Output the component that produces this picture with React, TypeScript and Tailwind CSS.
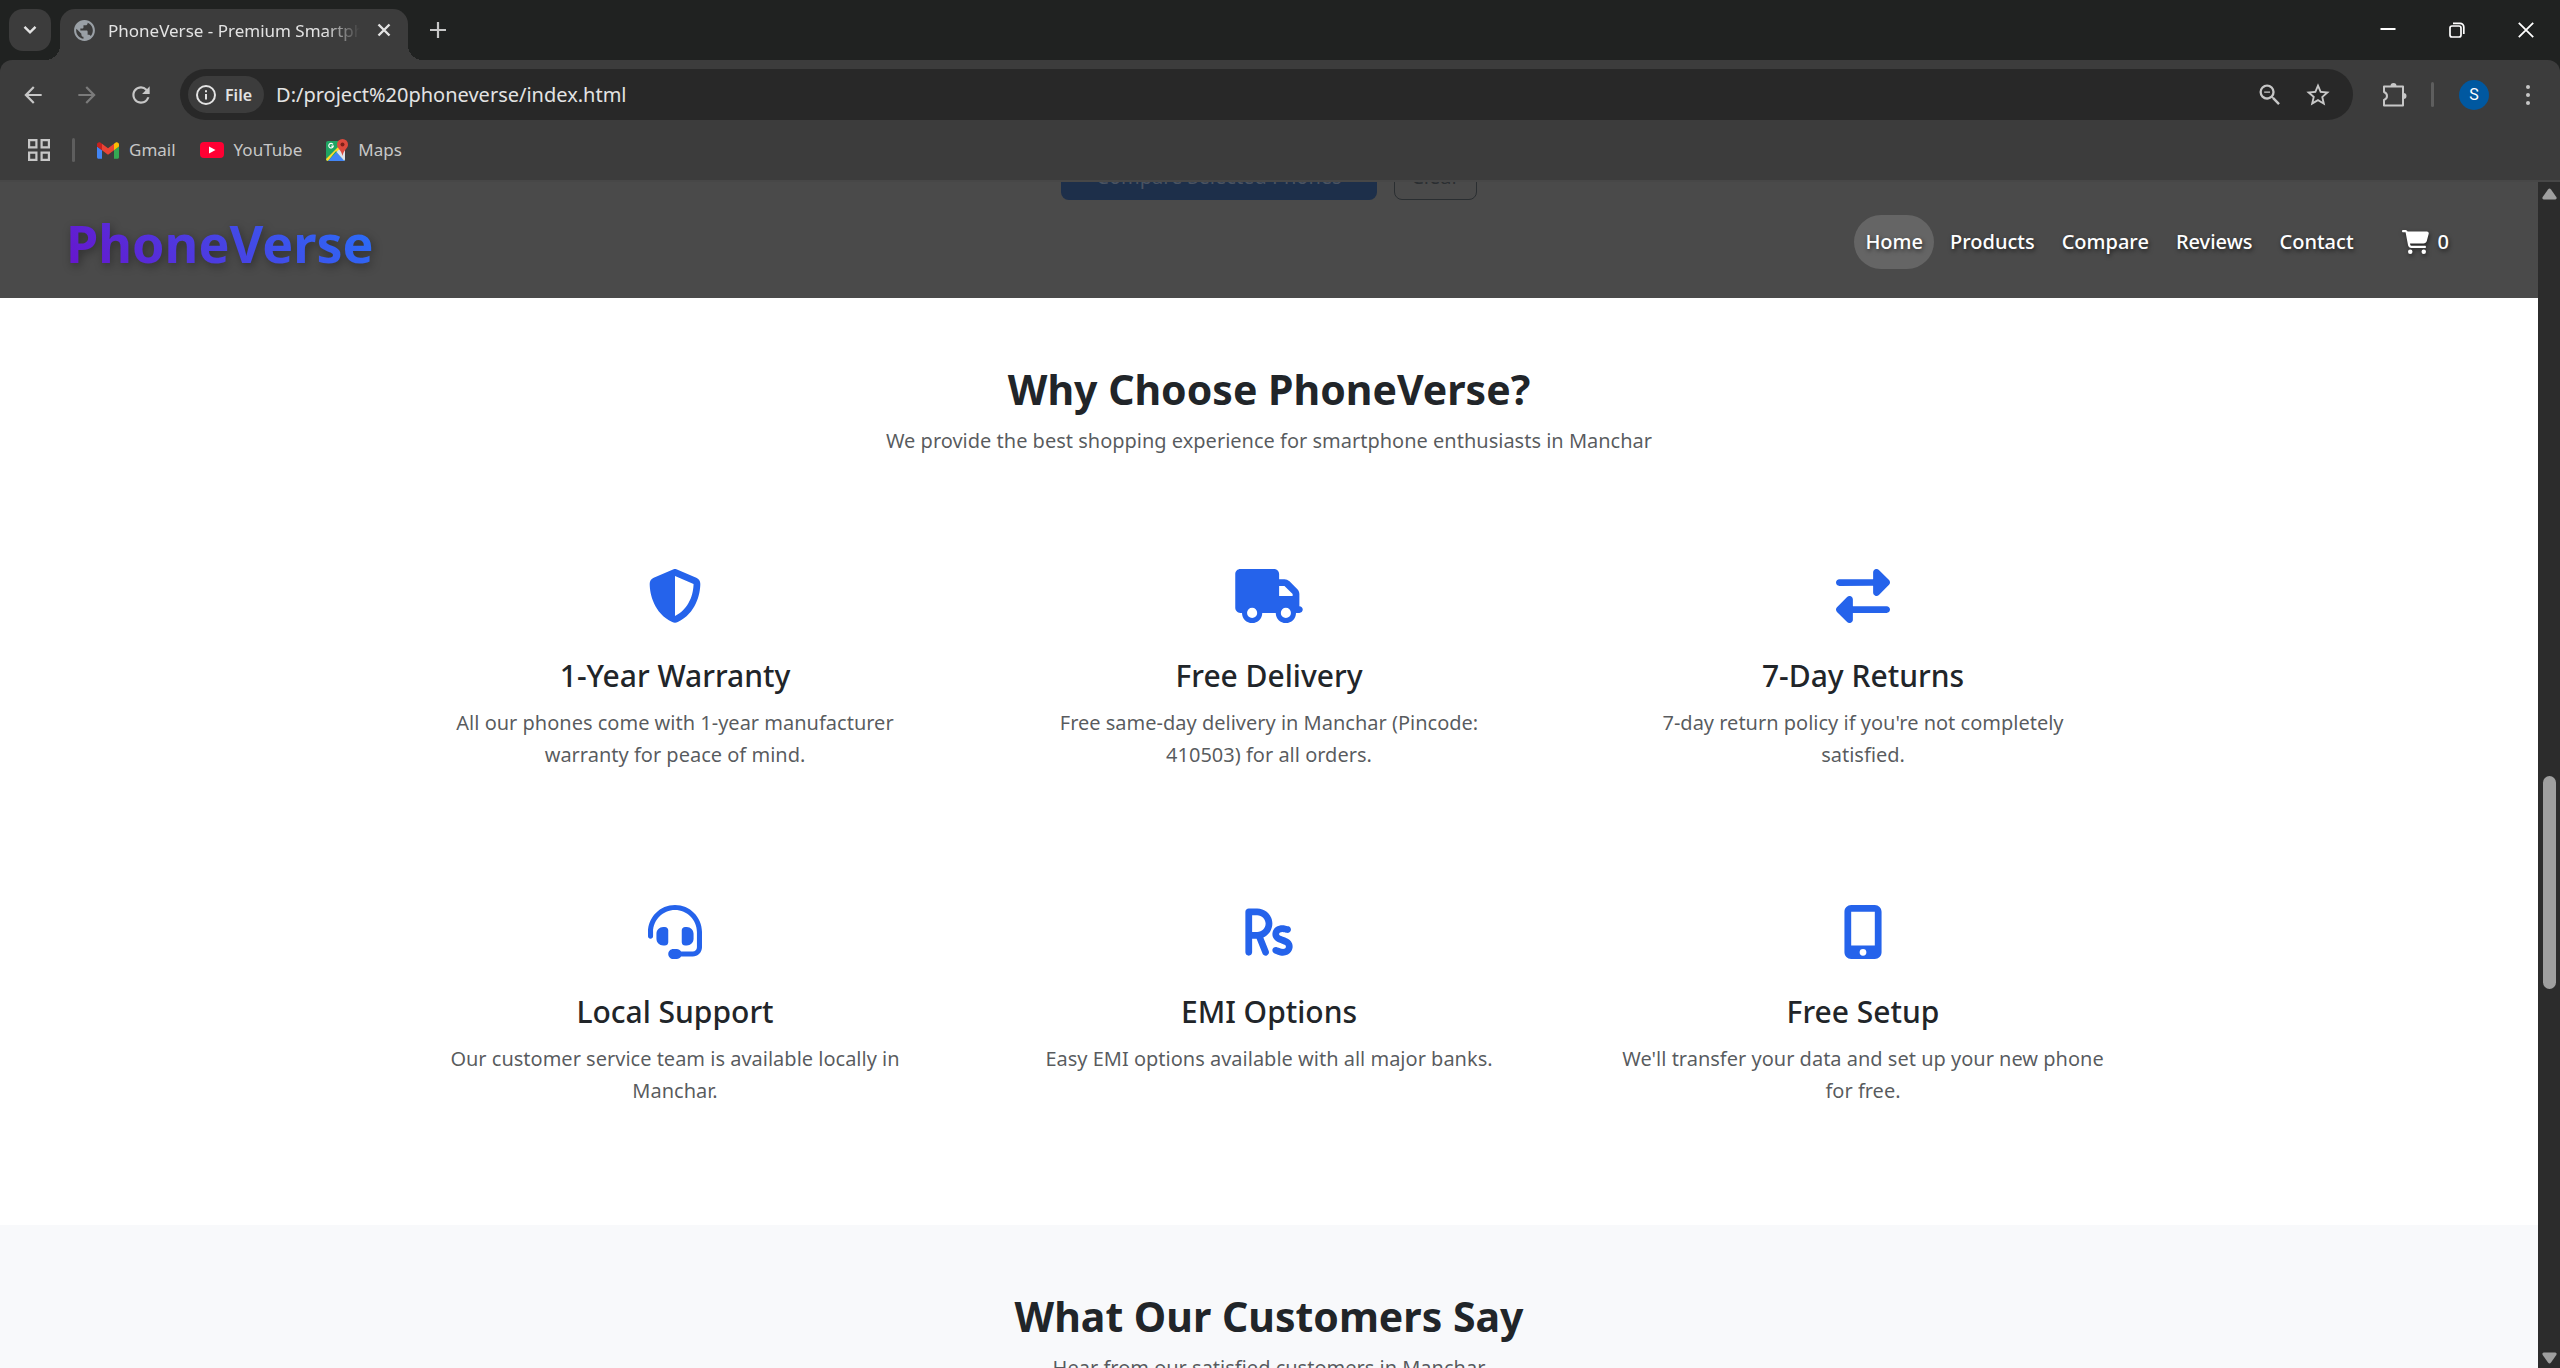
import type { ComponentType, ReactNode } from 'react';
import {
  FaCartShopping,
  FaHeadset,
  FaMobileScreenButton,
  FaRightLeft,
  FaRupeeSign,
  FaShieldHalved,
  FaTruck,
} from 'react-icons/fa6';
import { MdArrowBack, MdArrowForward, MdOutlineZoomOut, MdPublic, MdRefresh, MdStarBorder } from 'react-icons/md';

type Feature = {
  icon: ComponentType<{ className?: string }>;
  title: string;
  text: string;
};

const features: Feature[] = [
  { icon: FaShieldHalved, title: '1-Year Warranty', text: 'All our phones come with 1-year manufacturer warranty for peace of mind.' },
  { icon: FaTruck, title: 'Free Delivery', text: 'Free same-day delivery in Manchar (Pincode: 410503) for all orders.' },
  { icon: FaRightLeft, title: '7-Day Returns', text: "7-day return policy if you're not completely satisfied." },
  { icon: FaHeadset, title: 'Local Support', text: 'Our customer service team is available locally in Manchar.' },
  { icon: FaRupeeSign, title: 'EMI Options', text: 'Easy EMI options available with all major banks.' },
  { icon: FaMobileScreenButton, title: 'Free Setup', text: "We'll transfer your data and set up your new phone for free." },
];

const navLinks = ['Home', 'Products', 'Compare', 'Reviews', 'Contact'];

function TabStrip() {
  return (
    <div className="flex h-[60px] items-start text-[#e3e3e3]">
      <button aria-label="Search tabs" className="mt-[9px] ml-[9px] flex size-[42px] items-center justify-center rounded-[14px] bg-[#3c3c3c]">
        <svg width="14" height="10" viewBox="0 0 14 10" fill="none" stroke="currentColor" strokeWidth="2.4">
          <path d="M1.5 1.8 7 7.4l5.5-5.6" />
        </svg>
      </button>
      <div className="relative mt-[9px] ml-[9px] flex h-[51px] w-[348px] items-start rounded-t-[15px] bg-[#3c3c3c] pr-[16px] pl-[12px]">
        <span className="absolute bottom-0 -left-[15px] size-[15px] bg-[radial-gradient(circle_at_0_0,transparent_15px,#3c3c3c_15px)]" />
        <span className="absolute -right-[15px] bottom-0 size-[15px] bg-[radial-gradient(circle_at_100%_0,transparent_15px,#3c3c3c_15px)]" />
        <div className="flex h-[42px] w-full items-center">
          <MdPublic className="size-[25px] shrink-0 text-[#9aa0a6]" />
          <span className="ml-[11px] w-[252px] overflow-hidden pt-[2px] text-[17px] whitespace-nowrap [mask-image:linear-gradient(to_right,black_86%,transparent)]">
            PhoneVerse - Premium Smartphones
          </span>
          <button aria-label="Close tab" className="ml-auto flex size-[16px] items-center justify-center">
            <svg width="14" height="14" viewBox="0 0 14 14" stroke="currentColor" strokeWidth="2.4">
              <path d="M1.5 1.5l11 11M12.5 1.5l-11 11" />
            </svg>
          </button>
        </div>
      </div>
      <button aria-label="New tab" className="mt-[9px] ml-[9px] flex size-[42px] items-center justify-center text-[#c7c7c7]">
        <svg width="16" height="16" viewBox="0 0 16 16" stroke="currentColor" strokeWidth="2.2">
          <path d="M8 0v16M0 8h16" />
        </svg>
      </button>
      <div className="ml-auto flex text-white">
        <button aria-label="Minimize" className="flex h-[60px] w-[69px] items-center justify-center">
          <svg width="16" height="16" viewBox="0 0 16 16" stroke="currentColor" strokeWidth="2">
            <path d="M.5 7h15" />
          </svg>
        </button>
        <button aria-label="Restore" className="flex h-[60px] w-[69px] items-center justify-center">
          <svg width="16" height="16" viewBox="0 0 16 16" fill="none" stroke="currentColor" strokeWidth="1.7">
            <rect x="1" y="4" width="11" height="11" rx="2" />
            <path d="M4 1.3h7A3.7 3.7 0 0 1 14.8 5v7" />
          </svg>
        </button>
        <button aria-label="Close window" className="flex h-[60px] w-[69px] items-center justify-center">
          <svg width="16" height="16" viewBox="0 0 16 16" stroke="currentColor" strokeWidth="1.8">
            <path d="M.8.8l14.4 14.4M15.2.8.8 15.2" />
          </svg>
        </button>
      </div>
    </div>
  );
}

function Toolbar() {
  return (
    <div className="flex h-[60px] items-center pt-[9px] pl-[6px] text-[#c7c7c7]">
      <button aria-label="Back" className="flex h-[51px] w-[54px] items-center justify-center">
        <MdArrowBack className="size-[26px]" />
      </button>
      <button aria-label="Forward" className="flex h-[51px] w-[54px] items-center justify-center text-[#7b7b7b]">
        <MdArrowForward className="size-[26px]" />
      </button>
      <button aria-label="Reload" className="flex h-[51px] w-[54px] items-center justify-center">
        <MdRefresh className="size-[26px]" />
      </button>
      <div className="ml-[12px] flex h-[51px] flex-1 items-center rounded-full bg-[#282828] pr-[21px] pl-[8px]">
        <button className="flex h-[37px] items-center gap-[9px] rounded-full bg-[#3c3c3c] pr-[12px] pl-[8px] text-[16px] font-semibold text-[#e3e3e3]">
          <svg width="20" height="20" viewBox="0 0 20 20" fill="none" stroke="currentColor" strokeWidth="2">
            <circle cx="10" cy="10" r="9" />
            <path d="M10 9v5.5M10 5.3v2" />
          </svg>
          File
        </button>
        <input
          aria-label="Address"
          className="ml-[12px] min-w-0 flex-1 bg-transparent text-[20px] text-[#e3e3e3] outline-none"
          defaultValue="D:/project%20phoneverse/index.html"
        />
        <button aria-label="Zoom" className="mr-[20px]">
          <MdOutlineZoomOut className="size-[28px]" />
        </button>
        <button aria-label="Bookmark this tab">
          <MdStarBorder className="size-[28px]" />
        </button>
      </div>
      <button aria-label="Extensions" className="ml-[28px]">
        <svg width="26" height="26" viewBox="0 0 26 26" fill="none" stroke="currentColor" strokeWidth="2" strokeLinejoin="round">
          <path d="M3 4.500h19v19H3v-5.500c4-1.500 4-6.500 0-8z" />
          <path d="M9.500 4a3 3 0 0 1 6 0zM22.500 11a3 3 0 0 1 0 6z" fill="currentColor" stroke="none" />
        </svg>
      </button>
      <span className="ml-[24px] h-[25px] w-[3px] rounded-full bg-[#5e5e5e]" />
      <button aria-label="Profile" className="ml-[25px] flex size-[30px] items-center justify-center rounded-full bg-[#0058a0] font-['Roboto'] text-[16px] text-white">
        S
      </button>
      <button aria-label="Menu" className="mr-[18px] ml-[25px] flex w-[28px] flex-col items-center gap-[4px]">
        <span className="size-[4px] rounded-full bg-[#c7c7c7]" />
        <span className="size-[4px] rounded-full bg-[#c7c7c7]" />
        <span className="size-[4px] rounded-full bg-[#c7c7c7]" />
      </button>
    </div>
  );
}

function Bookmark({ label, children }: { label: string; children: ReactNode }) {
  return (
    <a href="#" className="flex items-center gap-[10px]">
      {children}
      {label}
    </a>
  );
}

function BookmarksBar() {
  return (
    <div className="flex h-[62px] items-center border-b-2 border-[#474747] pl-[28px] text-[17px] text-[#c7c7c7]">
      <button aria-label="Apps">
        <svg width="22" height="22" viewBox="0 0 22 22" fill="none" stroke="currentColor" strokeWidth="2.2">
          <path d="M1.1 1.1h7.3v7.3H1.1zM13.6 1.1h7.3v7.3h-7.3zM1.1 13.6h7.3v7.3H1.1zM13.6 13.6h7.3v7.3h-7.3z" />
        </svg>
      </button>
      <span className="ml-[22px] h-[24px] w-[3px] rounded-full bg-[#5e5e5e]" />
      <nav className="ml-[22px] flex items-center gap-[24px]">
        <Bookmark label="Gmail">
          <svg width="22" height="17" viewBox="52 42 88 66">
            <path fill="#4285f4" d="M58 108h14V74L52 59v43c0 3.320 2.690 6 6 6" />
            <path fill="#34a853" d="M120 108h14c3.320 0 6-2.690 6-6V59l-20 15" />
            <path fill="#fbbc04" d="M120 48v26l20-15v-8c0-7.420-8.470-11.650-14.400-7.200" />
            <path fill="#ea4335" d="M72 74V48l24 18 24-18v26L96 92" />
            <path fill="#c5221f" d="M52 51v8l20 15V48l-5.600-4.200c-5.940-4.450-14.400-.22-14.400 7.200" />
          </svg>
        </Bookmark>
        <Bookmark label="YouTube">
          <svg width="24" height="16" viewBox="0 0 24 16">
            <rect width="24" height="16" rx="4" fill="#ff0033" />
            <path d="M9 4.500v7l6.500-3.500z" fill="#fff" />
          </svg>
        </Bookmark>
        <Bookmark label="Maps">
          <svg width="22" height="22" viewBox="0 0 22 22">
            <rect y="2" width="19" height="20" rx="2" fill="#1fa463" />
            <path d="M0 20 10.500 9.500 16 4h3v8L9.500 12.500 2 22a2 2 0 0 1-2-2z" fill="#ffda2c" />
            <path d="M2 22 10.500 13 19 22z" fill="#4285f4" />
            <path d="M10.500 13 14 9.500h5V20q0 1.500-1 1.500z" fill="#dfe3e8" />
            <path d="M16.500 0a5.500 5.500 0 0 1 5.500 5.500c0 4-4.500 5.500-5.500 11.500-1-6-5.500-7.500-5.500-11.500A5.500 5.500 0 0 1 16.500 0z" fill="#dc4a3d" />
            <circle cx="16.500" cy="5.500" r="2" fill="#7d2119" />
            <path d="M7 5.400A2.300 2.300 0 1 0 7.300 7.200H5.300" fill="none" stroke="#fff" strokeWidth="1.200" />
          </svg>
        </Bookmark>
      </nav>
    </div>
  );
}

function SiteHeader() {
  return (
    <header className="relative flex h-[116px] items-center justify-between bg-[#4a4a4a] pr-[89px] pl-[66px]">
      <div className="absolute inset-x-0 top-0 flex h-[18px] items-end justify-center gap-[17px] overflow-hidden text-[20px]">
        <button className="h-[51px] w-[316px] shrink-0 rounded-[8px] bg-[#1d2f4a] pt-[4px] text-[#4a5361]">Compare Selected Phones</button>
        <button className="h-[51px] w-[83px] shrink-0 rounded-[8px] border border-[#2a2e31] pt-[4px] text-[#2a2e31]">Clear</button>
      </div>
      <a
        href="#"
        className="bg-linear-[45deg,#6a11cb,#2575fc] bg-clip-text pt-[6px] text-[52px] leading-[70px] font-bold text-transparent drop-shadow-[2px_3px_5px_rgba(0,0,0,0.35)]"
      >
        PhoneVerse
      </a>
      <nav className="flex items-center gap-[5px] pt-[4px] text-[20px] font-medium text-white [text-shadow:1px_2px_4px_rgba(0,0,0,0.6)]">
        {navLinks.map((label, index) => (
          <a
            key={label}
            href="#"
            className={`flex h-[54px] items-center rounded-full px-[11px] ${index === 0 ? 'bg-[#656565]' : ''}`}
          >
            {label}
          </a>
        ))}
        <a href="#" aria-label="Cart, 0 items" className="ml-[32px] flex items-center gap-[9px]">
          <FaCartShopping className="h-[24px] w-[27px] drop-shadow-[1px_2px_2px_rgba(0,0,0,0.5)]" />
          0
        </a>
      </nav>
    </header>
  );
}

function SectionHeading({ title, subtitle }: { title: string; subtitle: string }) {
  return (
    <div className="text-center">
      <h2 className="text-[41px] leading-[52px] font-bold text-[#212529]">{title}</h2>
      <p className="mt-[10px] text-[20px] leading-[32px] text-[#212529]/75">{subtitle}</p>
    </div>
  );
}

function Scrollbar() {
  return (
    <div className="flex w-[22px] shrink-0 flex-col items-center bg-[#2c2c2c]">
      <svg className="mt-[6px]" width="15" height="12" viewBox="0 0 15 12" fill="#9f9f9f">
        <path d="M6 1.500q1.500-1.800 3 0l5.300 7.500q1 2-1 2.500H1.700q-2-.5-1-2.500z" />
      </svg>
      <div className="mt-[576px] h-[213px] w-[13px] rounded-full bg-[#9f9f9f]" />
      <svg className="mt-auto mb-[4px]" width="15" height="12" viewBox="0 0 15 12" fill="#9f9f9f">
        <path d="M6 10.500q1.500 1.800 3 0l5.300-7.500q1-2-1-2.500H1.700q-2 .5-1 2.500z" />
      </svg>
    </div>
  );
}

export default function App() {
  return (
    <div className="flex h-screen flex-col overflow-hidden bg-[#202221] font-['Noto_Sans',sans-serif]">
      <TabStrip />
      <div className="rounded-t-[12px] bg-[#3c3c3c]">
        <Toolbar />
        <BookmarksBar />
      </div>
      <div className="flex min-h-0 flex-1">
        <div className="min-w-0 flex-1 overflow-hidden bg-white">
          <SiteHeader />
          <section className="pt-[65px] pb-[118px]">
            <SectionHeading
              title="Why Choose PhoneVerse?"
              subtitle="We provide the best shopping experience for smartphone enthusiasts in Manchar"
            />
            <div className="mx-auto mt-[112px] grid max-w-[1782px] grid-cols-3 gap-y-[134px]">
              {features.map(({ icon: Icon, title, text }) => (
                <article key={title} className="flex flex-col items-center px-[54px] text-center">
                  <Icon className="h-[54px] w-[68px] text-[#2563eb]" />
                  <h3 className="mt-[33px] text-[30px] leading-[39px] font-medium text-[#212529]">{title}</h3>
                  <p className="mt-[12px] text-[20px] leading-[32px] text-[#212529]/75">{text}</p>
                </article>
              ))}
            </div>
          </section>
          <section className="bg-[#f8f9fb] pt-[65px] pb-[65px]">
            <SectionHeading title="What Our Customers Say" subtitle="Hear from our satisfied customers in Manchar" />
          </section>
        </div>
        <Scrollbar />
      </div>
    </div>
  );
}
